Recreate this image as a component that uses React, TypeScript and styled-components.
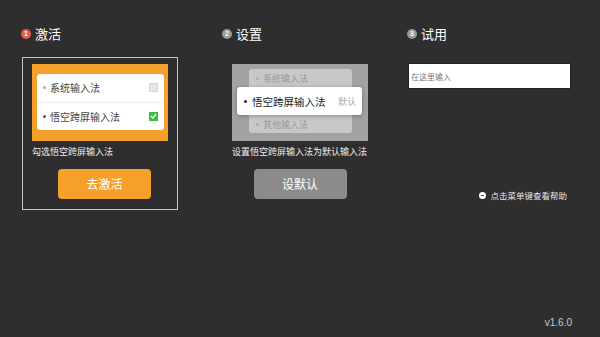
import styled, { createGlobalStyle } from 'styled-components';

const GlobalStyle = createGlobalStyle`
  body {
    margin: 0;
    background: #2e2e2e;
    font-family: 'Noto Sans CJK SC', 'Noto Sans', sans-serif;
  }
`;

const App = () => {
  return (
    <Page>
      <GlobalStyle />
      <Columns>
        <Column width={201}>
          <Title>
            <Num color="#e25b5b">1</Num>
            激活
          </Title>
          <StepBox>
            <OrangeFrame>
              <ListCard>
                <ListRow>
                  <Dot color="#aaa" />
                  <RowText>系统输入法</RowText>
                  <Check />
                </ListRow>
                <ListRow>
                  <Dot color="#c0262b" />
                  <RowText>悟空跨屏输入法</RowText>
                  <Check checked>
                    <svg width="7" height="6" viewBox="0 0 7 6">
                      <path d="M1 3 L3 5 L6 1" stroke="#fff" strokeWidth="1.4" fill="none" />
                    </svg>
                  </Check>
                </ListRow>
              </ListCard>
            </OrangeFrame>
            <Caption>勾选悟空跨屏输入法</Caption>
            <Button color="#f5a02a">去激活</Button>
          </StepBox>
        </Column>
        <Column width={185}>
          <Title>
            <Num color="#9a9a9a">2</Num>
            设置
          </Title>
          <StepBody>
            <GrayFrame>
              <FadedCard>
                <FadedRow>
                  <Dot color="#aaa" />
                  系统输入法
                </FadedRow>
                <ActiveRow>
                  <Dot color="#222" />
                  <ActiveText>悟空跨屏输入法</ActiveText>
                  <DefaultTag>默认</DefaultTag>
                </ActiveRow>
                <FadedRow>
                  <Dot color="#aaa" />
                  其他输入法
                </FadedRow>
              </FadedCard>
            </GrayFrame>
            <Caption>设置悟空跨屏输入法为默认输入法</Caption>
            <Button color="#8b8b8b">设默认</Button>
          </StepBody>
        </Column>
        <Column grow>
          <Title>
            <Num color="#9a9a9a">3</Num>
            试用
          </Title>
          <TryInput placeholder="在这里输入" />
          <Help>
            <HelpIcon />
            点击菜单键查看帮助
          </Help>
        </Column>
      </Columns>
      <Version>v1.6.0</Version>
    </Page>
  );
};

const Page = styled.div`
  width: 600px;
  height: 337px;
  box-sizing: border-box;
  padding: 25px 28px 9px 21px;
  display: flex;
  flex-direction: column;
  overflow: hidden;
`;

const Columns = styled.div`
  display: flex;
  flex: 1;
`;

const Column = styled.div<{ width?: number; grow?: boolean }>`
  width: ${({ width }) => (width ? `${width}px` : 'auto')};
  flex: ${({ grow }) => (grow ? '1' : '0 0 auto')};
  display: flex;
  flex-direction: column;
`;

const Title = styled.div`
  display: flex;
  align-items: center;
  height: 17px;
  color: #fff;
  font-size: 13px;
  line-height: 17px;
  gap: 4px;
`;

const Num = styled.span<{ color: string }>`
  width: 10px;
  height: 10px;
  border-radius: 50%;
  background: ${({ color }) => color};
  color: #fff;
  font-family: 'Liberation Sans', sans-serif;
  font-size: 7px;
  font-weight: 700;
  line-height: 10px;
  text-align: center;
`;

const StepBox = styled.div`
  margin-top: 15px;
  margin-left: 1px;
  width: 156px;
  height: 153px;
  box-sizing: border-box;
  border: 1px solid #c4c4c4;
  padding: 6px 0 0 9px;
  display: flex;
  flex-direction: column;
`;

const StepBody = styled.div`
  margin-top: 22px;
  margin-left: 10px;
  width: 136px;
  display: flex;
  flex-direction: column;
`;

const OrangeFrame = styled.div`
  width: 136px;
  height: 77px;
  box-sizing: border-box;
  background: #f5a02a;
  padding: 10px 4px 0 5px;
`;

const ListCard = styled.div`
  height: 56px;
  background: #fff;
  border-radius: 3px;
  display: flex;
  flex-direction: column;
`;

const ListRow = styled.div`
  flex: 1;
  display: flex;
  align-items: center;
  padding: 0 6px;
  gap: 4px;
  & + & {
    border-top: 1px solid #eee;
  }
`;

const Dot = styled.span<{ color: string }>`
  width: 3px;
  height: 3px;
  border-radius: 50%;
  background: ${({ color }) => color};
  flex-shrink: 0;
`;

const RowText = styled.span`
  flex: 1;
  font-size: 10px;
  color: #444;
`;

const Check = styled.span<{ checked?: boolean }>`
  width: 9px;
  height: 9px;
  box-sizing: border-box;
  border: 1px solid ${({ checked }) => (checked ? '#36c23a' : '#d6d6d6')};
  background: ${({ checked }) => (checked ? '#36c23a' : '#e6e6e6')};
  display: flex;
  align-items: center;
  justify-content: center;
`;

const Caption = styled.div`
  margin-top: 5px;
  font-size: 9px;
  line-height: 12px;
  color: #eee;
  white-space: nowrap;
`;

const Button = styled.div<{ color: string }>`
  align-self: center;
  margin-top: 11px;
  width: 93px;
  height: 30px;
  border-radius: 4px;
  background: ${({ color }) => color};
  color: #fff;
  font-size: 12px;
  line-height: 30px;
  text-align: center;
`;

const GrayFrame = styled.div`
  height: 77px;
  box-sizing: border-box;
  background: #a2a2a2;
  padding: 5px 16px 8px 17px;
  display: flex;
`;

const FadedCard = styled.div`
  flex: 1;
  background: #c8c8c8;
  border-radius: 3px;
  display: flex;
  flex-direction: column;
`;

const FadedRow = styled.div`
  flex: 1;
  display: flex;
  align-items: center;
  gap: 4px;
  padding-left: 7px;
  font-size: 9px;
  color: #999;
`;

const ActiveRow = styled.div`
  height: 28px;
  margin: 0 -10px 0 -12px;
  background: #fff;
  border-radius: 3px;
  box-shadow: 0 1px 4px rgba(0, 0, 0, 0.3);
  display: flex;
  align-items: center;
  padding: 0 6px 0 7px;
  gap: 5px;
`;

const ActiveText = styled.span`
  flex: 1;
  font-size: 10.5px;
  color: #222;
`;

const DefaultTag = styled.span`
  font-size: 9px;
  color: #aaa;
`;

const TryInput = styled.input`
  margin-top: 21px;
  margin-left: 1px;
  width: 163px;
  height: 26px;
  box-sizing: border-box;
  border: 1px solid #222;
  background: #fff;
  padding: 0 2px;
  font-family: 'Noto Sans CJK SC', sans-serif;
  font-size: 8px;
  outline: none;
  &::placeholder {
    color: #777;
  }
`;

const Help = styled.div`
  margin-top: 100px;
  align-self: flex-end;
  margin-right: 5px;
  display: flex;
  align-items: center;
  gap: 4px;
  font-size: 8.5px;
  color: #e6e6e6;
  white-space: nowrap;
`;

const HelpIcon = styled.span`
  width: 7px;
  height: 7px;
  border-radius: 50%;
  background: #fff;
  position: relative;
  &::after {
    content: '';
    position: absolute;
    left: 2px;
    top: 3px;
    width: 3px;
    height: 1px;
    background: #555;
  }
`;

const Version = styled.div`
  align-self: flex-end;
  font-family: 'Liberation Sans', sans-serif;
  font-size: 10px;
  color: #c8c8c8;
`;

export default App;
